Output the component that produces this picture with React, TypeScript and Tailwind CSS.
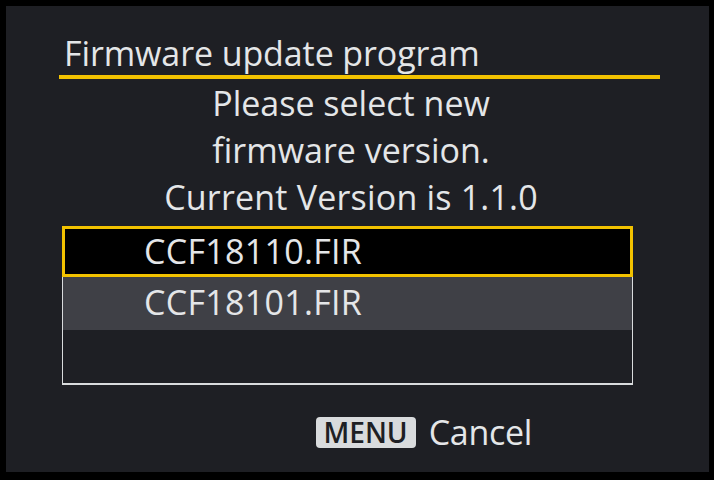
export default function App() {
    return (
        <div className="w-[714px] h-[480px] bg-black pt-[6px] pl-[6px] pr-[5px] pb-[8px]" style={{ fontFamily: '"Open Sans", "Noto Sans", sans-serif' }}>
            <div className="h-full bg-[#1e1f24] text-[#e4e6e8] flex flex-col pt-[27px]">
                {/* title */}
                <div className="ml-[53px] mr-[49px] border-b-4 border-[#f2c200] pb-[2px]">
                    <h1 className="text-[34px] leading-[40px] pl-[5px] tracking-[-0.1px]">Firmware update program</h1>
                </div>
                <div className="flex flex-col items-center text-[34px] leading-[47px] pt-[1px] pr-[13px]">
                    <p>Please select new</p>
                    <p>firmware version.</p>
                    <p className="tracking-[0.2px]">Current Version is 1.1.0</p>
                </div>

                {/* file list */}
                <div className="ml-[56px] mt-[5px] w-[571px] h-[159px] border-x border-b-2 border-[#d9dbdd] flex flex-col">
                    <div className="h-[51px] bg-black border-[3px] border-[#f2c200] -mx-px flex items-center pl-[79px] pb-[1px] text-[34px] leading-[34px] tracking-[0.3px]">
                        CCF18110.FIR
                    </div>
                    <div className="h-[53px] bg-[#3f4046] flex items-center pl-[81px] pb-[3px] text-[34px] leading-[34px] tracking-[0.3px]">
                        CCF18101.FIR
                    </div>
                </div>

                <div className="flex items-center justify-end pr-[177px] mt-[27px] gap-[13px]">
                    <span className="bg-[#d9dbdd] text-[#1e1f24] rounded-[4px] px-[8px] h-[31px] flex items-center text-[28px] font-semibold leading-none">
                        MENU
                    </span>
                    <span className="text-[34px] leading-[40px] tracking-[-0.3px]">Cancel</span>
                </div>
            </div>
        </div>
    );
}
